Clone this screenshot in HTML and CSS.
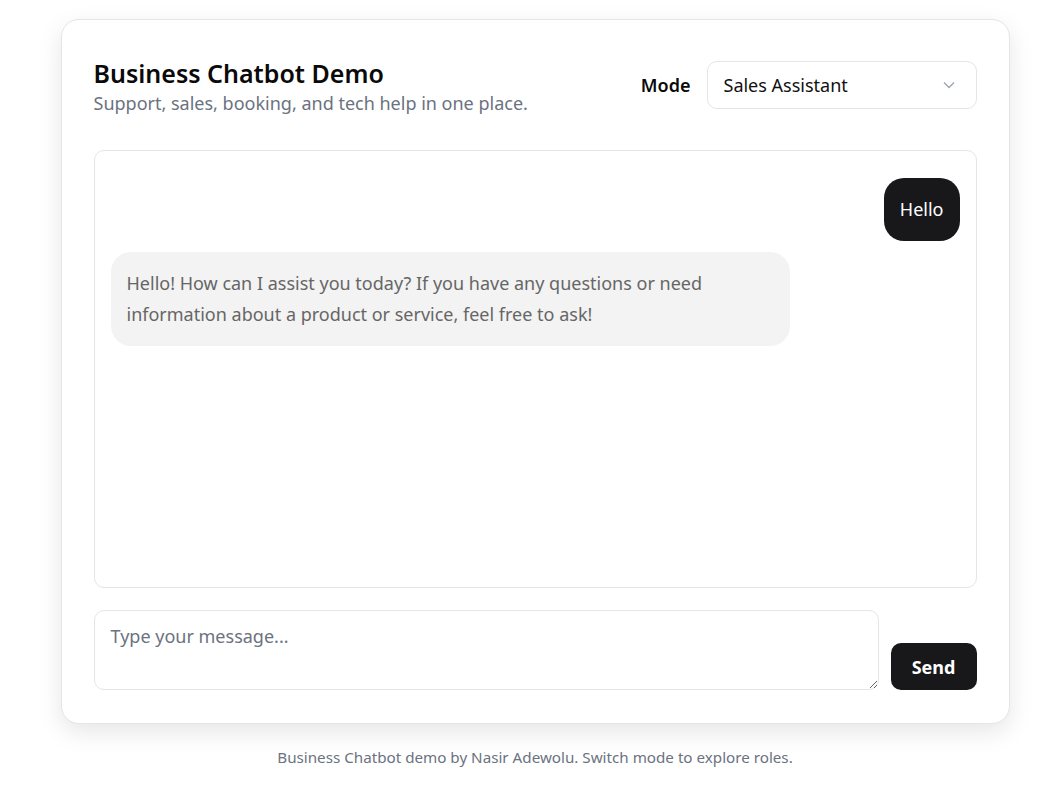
FILE: index.html
```html
<!DOCTYPE html>
<html lang="en">
<head>
<meta charset="utf-8">
<title>Business Chatbot Demo</title>
<link rel="stylesheet" href="styles.css">
</head>
<body>
<main class="card">
  <header class="head">
    <div class="titles">
      <h1 class="title">Business Chatbot Demo</h1>
      <p class="subtitle">Support, sales, booking, and tech help in one place.</p>
    </div>
    <div class="mode">
      <span class="mode-label">Mode</span>
      <div class="select">
        <span>Sales Assistant</span>
        <svg class="chev" width="14" height="14" viewBox="0 0 14 14"><path d="M2 4.5 L7 9.5 L12 4.5" fill="none" stroke="#9ca3af" stroke-width="1.3"/></svg>
      </div>
    </div>
  </header>
  <section class="chat">
    <div class="msg user">Hello</div>
    <div class="msg bot">Hello! How can I assist you today? If you have any questions or need information about a product or service, feel free to ask!</div>
  </section>
  <div class="composer">
    <textarea class="input" placeholder="Type your message..."></textarea>
    <button class="send">Send</button>
  </div>
</main>
<p class="foot">Business Chatbot demo by Nasir Adewolu. Switch mode to explore roles.</p>
</body>
</html>
```
FILE: styles.css
```css
* { box-sizing: border-box; }
body {
  margin: 0;
  padding: 19px 0 0 8px;
  background: #fff;
  font-family: "Noto Sans", "Open Sans", sans-serif;
  color: #111;
}
.card {
  width: 949px;
  margin: 0 auto;
  background: #fff;
  border: 1px solid #e5e5e5;
  border-radius: 18px;
  box-shadow: 0 8px 24px rgba(0,0,0,0.10);
  padding: 32px 32px 33px;
}
.head {
  display: flex;
  justify-content: space-between;
  align-items: flex-start;
  margin-bottom: 35px;
}
.title {
  margin: 3px 0 0;
  font-size: 25px;
  font-weight: 600;
  line-height: 36px;
  color: #0a0a0a;
}
.subtitle {
  margin: 0;
  font-size: 18px;
  line-height: 24px;
  color: #6b7280;
}
.mode {
  display: flex;
  align-items: center;
  gap: 16px;
  margin-top: 9px;
}
.mode-label {
  font-size: 18px;
  font-weight: 600;
  color: #0a0a0a;
}
.select {
  width: 270px;
  height: 48px;
  border: 1px solid #e5e5e5;
  border-radius: 10px;
  display: flex;
  align-items: center;
  justify-content: space-between;
  padding: 0 20px 0 16px;
  font-size: 18px;
  color: #111;
}
.chat {
  height: 438px;
  border: 1px solid #e5e5e5;
  border-radius: 10px;
  padding: 27px 16px 16px;
  display: flex;
  flex-direction: column;
  gap: 11px;
}
.msg {
  max-width: 80%;
  font-size: 18px;
  line-height: 31px;
}
.user {
  align-self: flex-end;
  background: #18181b;
  color: #fff;
  border-radius: 20px;
  padding: 16px;
}
.bot {
  align-self: flex-start;
  background: #f3f3f3;
  color: #666;
  border-radius: 20px;
  padding: 16px;
}
.composer {
  display: flex;
  align-items: flex-end;
  gap: 12px;
  margin-top: 22px;
}
.input {
  flex: 1;
  height: 80px;
  border: 1px solid #e5e5e5;
  border-radius: 10px;
  padding: 13px 16px;
  font-family: inherit;
  font-size: 18px;
  color: #111;
  resize: vertical;
  outline: none;
}
.input::placeholder { color: #6b7280; }
.send {
  width: 86px;
  height: 47px;
  border: 0;
  border-radius: 10px;
  background: #18181b;
  color: #fff;
  font-family: inherit;
  font-size: 18px;
  font-weight: 700;
}
.foot {
  margin: 23px 0 0;
  text-align: center;
  font-size: 15.2px;
  color: #6b7280;
}
```
